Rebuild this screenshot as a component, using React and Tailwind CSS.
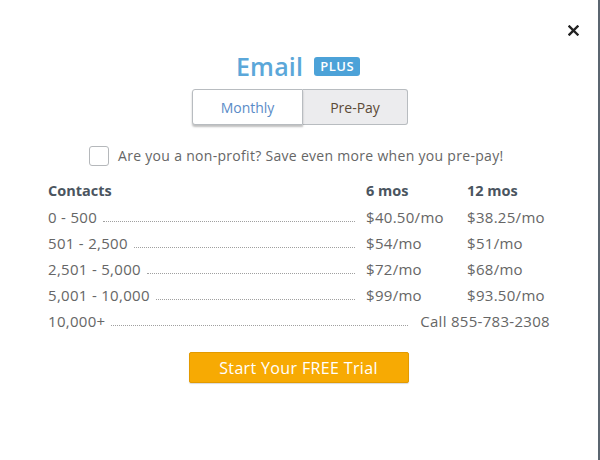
import React from "react";

const rows = [
  ["0 - 500", "$40.50/mo", "$38.25/mo"],
  ["501 - 2,500", "$54/mo", "$51/mo"],
  ["2,501 - 5,000", "$72/mo", "$68/mo"],
  ["5,001 - 10,000", "$99/mo", "$93.50/mo"],
];

export default function App() {
  return (
    <div
      className="relative w-[600px] h-[460px] bg-white overflow-hidden text-[#666]"
      style={{ fontFamily: '"Open Sans", "Liberation Sans", sans-serif' }}
    >
      <div className="absolute right-0 top-0 h-full w-[2px] bg-[#5b6570]" />
      <button className="absolute left-[566px] top-[22px] w-[14px] h-[16px] flex items-center justify-center">
        <svg width="11" height="11" viewBox="0 0 11 11">
          <path d="M1.5 1.5 L9.5 9.5 M9.5 1.5 L1.5 9.5" stroke="#222" strokeWidth="2.4" strokeLinecap="square" />
        </svg>
      </button>

      <div className="flex flex-col items-center pt-[50px]">
        <div className="flex items-center gap-[11px] h-[32px] pr-[4px]">
          <span className="text-[25px] font-semibold text-[#5ba7d9] leading-none tracking-[0.2px]">Email</span>
          <span className="bg-[#4ca2d8] text-white text-[13px] leading-[19px] px-[6px] rounded-[3px] font-semibold tracking-[0.5px] mt-[1px]">
            PLUS
          </span>
        </div>

        <div className="flex mt-[7px] h-[36px]">
          <div className="w-[111px] flex items-center justify-center bg-white border border-[#b8bcc0] rounded-l-[3px] shadow-[0_2px_2px_rgba(0,0,0,0.25)] text-[#5a8bc7] text-[14px] z-10">
            Monthly
          </div>
          <div className="w-[105px] flex items-center justify-center bg-[#ececee] border border-l-0 border-[#b8bcc0] rounded-r-[3px] text-[#5c4a36] text-[14px]">
            Pre-Pay
          </div>
        </div>

        <div className="flex items-center mt-[21px] w-full pl-[89px]">
          <span className="w-[20px] h-[20px] border-[1.5px] border-[#b5b8bb] rounded-[3px] bg-white" />
          <span className="ml-[9px] text-[14px] text-[#666] leading-[20px] tracking-[0.3px]">
            Are you a non-profit? Save even more when you pre-pay!
          </span>
        </div>
      </div>

      <div className="ml-[48px] w-[502px] mt-[11px] text-[15px] tracking-[0.3px]">
        <div className="flex h-[27px] items-center font-bold text-[#4b5560] text-[14.5px] tracking-normal">
          <span className="flex-1">Contacts</span>
          <span className="w-[101px]">6 mos</span>
          <span className="w-[83px]">12 mos</span>
        </div>
        {rows.map(([c, a, b]) => (
          <div key={c} className="flex h-[26px] items-center leading-[26px]">
            <span>{c}</span>
            <span className="flex-1 self-end mb-[8px] ml-[6px] mr-[11px] border-b border-dotted border-[#a0a0a0]" />
            <span className="w-[101px]">{a}</span>
            <span className="w-[83px]">{b}</span>
          </div>
        ))}
        <div className="flex h-[26px] items-center leading-[26px]">
          <span>10,000+</span>
          <span className="flex-1 self-end mb-[8px] ml-[6px] mr-[12px] border-b border-dotted border-[#a0a0a0]" />
          <span>Call 855-783-2308</span>
        </div>
      </div>

      <div className="flex justify-center mt-[18px] pr-[3px]">
        <button className="w-[220px] h-[31px] bg-[#f7aa03] border border-[#e39a00] rounded-[2px] text-white text-[16px] tracking-[0.35px] flex items-center justify-center shadow-[0_1px_1px_rgba(0,0,0,0.15)]">
          Start Your FREE Trial
        </button>
      </div>
    </div>
  );
}
